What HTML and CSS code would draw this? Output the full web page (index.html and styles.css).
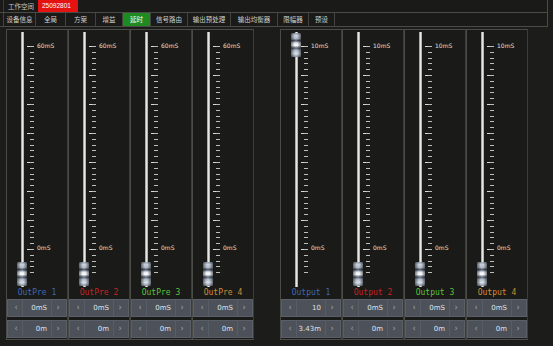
FILE: index.html
```html
<!DOCTYPE html>
<html>
<head>
<meta charset="utf-8">
<link rel="stylesheet" href="styles.css">
</head>
<body>
<div class="app">
  <div class="topbar">
    <div class="ws">工作空间</div>
    <div class="serial">25092801</div>
  </div>
  <div class="tabs">
    <div class="tab">设备信息</div>
    <div class="tab">全局</div>
    <div class="tab">方案</div>
    <div class="tab">增益</div>
    <div class="tab active">延时</div>
    <div class="tab">信号路由</div>
    <div class="tab">输出预处理</div>
    <div class="tab">输出均衡器</div>
    <div class="tab">限幅器</div>
    <div class="tab">预设</div>
  </div>
  <div class="main">
    <div class="group">
      <div class="strip">
        <div class="fader">
          <div class="track"></div><div class="ticks-long"></div><div class="ticks-short"></div>
          <span class="mark mark-top">60mS</span><span class="mark mark-zero">0mS</span>
          <div class="knob knob-bottom"></div>
        </div>
        <div class="name c1">OutPre 1</div>
        <div class="val"><span class="arr">‹</span><span class="field">0mS</span><span class="arr">›</span></div>
        <div class="val val2"><span class="arr">‹</span><span class="field">0m</span><span class="arr">›</span></div>
      </div>
      <div class="strip">
        <div class="fader">
          <div class="track"></div><div class="ticks-long"></div><div class="ticks-short"></div>
          <span class="mark mark-top">60mS</span><span class="mark mark-zero">0mS</span>
          <div class="knob knob-bottom"></div>
        </div>
        <div class="name c2">OutPre 2</div>
        <div class="val"><span class="arr">‹</span><span class="field">0mS</span><span class="arr">›</span></div>
        <div class="val val2"><span class="arr">‹</span><span class="field">0m</span><span class="arr">›</span></div>
      </div>
      <div class="strip">
        <div class="fader">
          <div class="track"></div><div class="ticks-long"></div><div class="ticks-short"></div>
          <span class="mark mark-top">60mS</span><span class="mark mark-zero">0mS</span>
          <div class="knob knob-bottom"></div>
        </div>
        <div class="name c3">OutPre 3</div>
        <div class="val"><span class="arr">‹</span><span class="field">0mS</span><span class="arr">›</span></div>
        <div class="val val2"><span class="arr">‹</span><span class="field">0m</span><span class="arr">›</span></div>
      </div>
      <div class="strip">
        <div class="fader">
          <div class="track"></div><div class="ticks-long"></div><div class="ticks-short"></div>
          <span class="mark mark-top">60mS</span><span class="mark mark-zero">0mS</span>
          <div class="knob knob-bottom"></div>
        </div>
        <div class="name c4">OutPre 4</div>
        <div class="val"><span class="arr">‹</span><span class="field">0mS</span><span class="arr">›</span></div>
        <div class="val val2"><span class="arr">‹</span><span class="field">0m</span><span class="arr">›</span></div>
      </div>
    </div>
    <div class="group">
      <div class="strip">
        <div class="fader">
          <div class="track"></div><div class="ticks-long"></div><div class="ticks-short"></div>
          <span class="mark mark-top">10mS</span><span class="mark mark-zero">0mS</span>
          <div class="knob knob-top"></div>
        </div>
        <div class="name c1">Output 1</div>
        <div class="val"><span class="arr">‹</span><span class="field">10</span><span class="arr">›</span></div>
        <div class="val val2"><span class="arr">‹</span><span class="field">3.43m</span><span class="arr">›</span></div>
      </div>
      <div class="strip">
        <div class="fader">
          <div class="track"></div><div class="ticks-long"></div><div class="ticks-short"></div>
          <span class="mark mark-top">10mS</span><span class="mark mark-zero">0mS</span>
          <div class="knob knob-bottom"></div>
        </div>
        <div class="name c2">Output 2</div>
        <div class="val"><span class="arr">‹</span><span class="field">0mS</span><span class="arr">›</span></div>
        <div class="val val2"><span class="arr">‹</span><span class="field">0m</span><span class="arr">›</span></div>
      </div>
      <div class="strip">
        <div class="fader">
          <div class="track"></div><div class="ticks-long"></div><div class="ticks-short"></div>
          <span class="mark mark-top">10mS</span><span class="mark mark-zero">0mS</span>
          <div class="knob knob-bottom"></div>
        </div>
        <div class="name c3">Output 3</div>
        <div class="val"><span class="arr">‹</span><span class="field">0mS</span><span class="arr">›</span></div>
        <div class="val val2"><span class="arr">‹</span><span class="field">0m</span><span class="arr">›</span></div>
      </div>
      <div class="strip">
        <div class="fader">
          <div class="track"></div><div class="ticks-long"></div><div class="ticks-short"></div>
          <span class="mark mark-top">10mS</span><span class="mark mark-zero">0mS</span>
          <div class="knob knob-bottom"></div>
        </div>
        <div class="name c4">Output 4</div>
        <div class="val"><span class="arr">‹</span><span class="field">0mS</span><span class="arr">›</span></div>
        <div class="val val2"><span class="arr">‹</span><span class="field">0m</span><span class="arr">›</span></div>
      </div>
    </div>
  </div>
</div>
</body>
</html>
```
FILE: styles.css
```css
* { box-sizing: border-box; }
html, body { margin: 0; padding: 0; }
body {
  width: 553px;
  height: 346px;
  overflow: hidden;
  background: #1c1c1a;
  font-family: "DejaVu Sans", sans-serif;
}
.app { width: 553px; height: 346px; }

.topbar {
  display: flex;
  height: 13px;
  padding-left: 3px;
  margin-right: 5px;
  border-right: 1px solid #4a4a46;
  border-bottom: 1px solid #4a4a46;
  background: #1a1a18;
}
.ws {
  width: 35px;
  font-family: "Noto Sans CJK SC", sans-serif;
  font-size: 6.5px;
  line-height: 12px;
  color: #c8c8c4;
  padding-left: 4px;
  border-left: 1px solid #3a3a36;
}
.serial {
  width: 40px;
  height: 12px;
  background: #e51212;
  color: #fff;
  font-family: "Liberation Sans", sans-serif;
  font-size: 6.5px;
  line-height: 12px;
  padding-left: 4px;
}

.tabs {
  display: flex;
  height: 14px;
  padding-left: 3px;
  margin-right: 5px;
  border-right: 1px solid #4a4a46;
  border-bottom: 1px solid #4a4a46;
  background: #1a1a18;
}
.tab {
  font-family: "Noto Sans CJK SC", sans-serif;
  font-size: 6.5px;
  line-height: 13px;
  color: #cfcfcb;
  text-align: center;
  border-left: 1px solid #44443f;
}
.tab:nth-child(1) { width: 32px; }
.tab:nth-child(2) { width: 30px; }
.tab:nth-child(3) { width: 30px; }
.tab:nth-child(4) { width: 27px; }
.tab:nth-child(5) { width: 28px; }
.tab:nth-child(6) { width: 37px; }
.tab:nth-child(7) { width: 43px; }
.tab:nth-child(8) { width: 47px; }
.tab:nth-child(9) { width: 31px; }
.tab:nth-child(10) { width: 27px; border-right: 1px solid #44443f; }
.tab.active { background: #1f8a22; color: #fff; }

.main {
  display: flex;
  gap: 26px;
  padding: 2px 0 0 6px;
}
.group { display: flex; gap: 0; }
.strip {
  width: 62px;
  height: 311px;
  border: 1px solid #4b4b47;
  border-right-color: #3c3c38;
  background: #1a1a18;
  display: flex;
  flex-direction: column;
}
.fader {
  position: relative;
  height: 258px;
}
.track {
  position: absolute;
  left: 14px;
  top: 2px;
  width: 3px;
  height: 255px;
  background: linear-gradient(to right, #8c8c8a, #e6e6e4, #9a9a98);
}
.ticks-long {
  position: absolute;
  left: 20px;
  top: 16px;
  width: 7px;
  height: 232px;
  background: repeating-linear-gradient(to bottom, #d8d8d4 0, #d8d8d4 1px, transparent 1px, transparent 29px);
}
.ticks-short {
  position: absolute;
  left: 23px;
  top: 16px;
  width: 4px;
  height: 231px;
  background: repeating-linear-gradient(to bottom, #bdbdb9 0, #bdbdb9 1px, transparent 1px, transparent 5.8px);
}
.mark {
  position: absolute;
  left: 30px;
  font-size: 6px;
  line-height: 8px;
  color: #e0e0dc;
}
.mark-top { top: 12px; }
.mark-zero { top: 214px; }
.knob {
  position: absolute;
  left: 10px;
  width: 10px;
  height: 24px;
  border-radius: 1px;
  background:
    linear-gradient(to right, rgba(0,0,0,.5), rgba(0,0,0,0) 35%, rgba(255,255,255,.18) 50%, rgba(0,0,0,0) 65%, rgba(0,0,0,.5)),
    linear-gradient(to bottom, #7c8696 0%, #c4ccd8 10%, #b0bac8 22%, #404858 32%, #e4eaf2 42%, #f6f9fc 52%, #4c5464 63%, #aeb8c8 73%, #d2dae4 86%, #788292 100%);
}
.knob-bottom { top: 232px; }
.knob-top { top: 3px; }

.name {
  height: 10px;
  font-family: "DejaVu Sans Mono", monospace;
  font-size: 8px;
  line-height: 10px;
  text-align: center;
}
.c1 { color: #3f68b4; }
.c2 { color: #cc2020; }
.c3 { color: #5cc13e; }
.c4 { color: #d48a36; }

.val {
  display: flex;
  align-items: center;
  height: 18px;
  margin-top: 1px;
  padding: 0 5px 0 5px;
  background: #4d525a;
  border: 1px solid #5a5f67;
  color: #dfe2e8;
  font-size: 7px;
}
.val2 { margin-top: 3px; }
.arr {
  font-size: 8px;
  color: #9ea4ae;
  width: 6px;
  line-height: 16px;
  text-align: center;
}
.field {
  flex: 1;
  text-align: right;
  padding-right: 4px;
  margin: 0 3px;
  height: 16px;
  line-height: 16px;
  border-left: 1px solid #585d65;
  border-right: 1px solid #585d65;
}
```
